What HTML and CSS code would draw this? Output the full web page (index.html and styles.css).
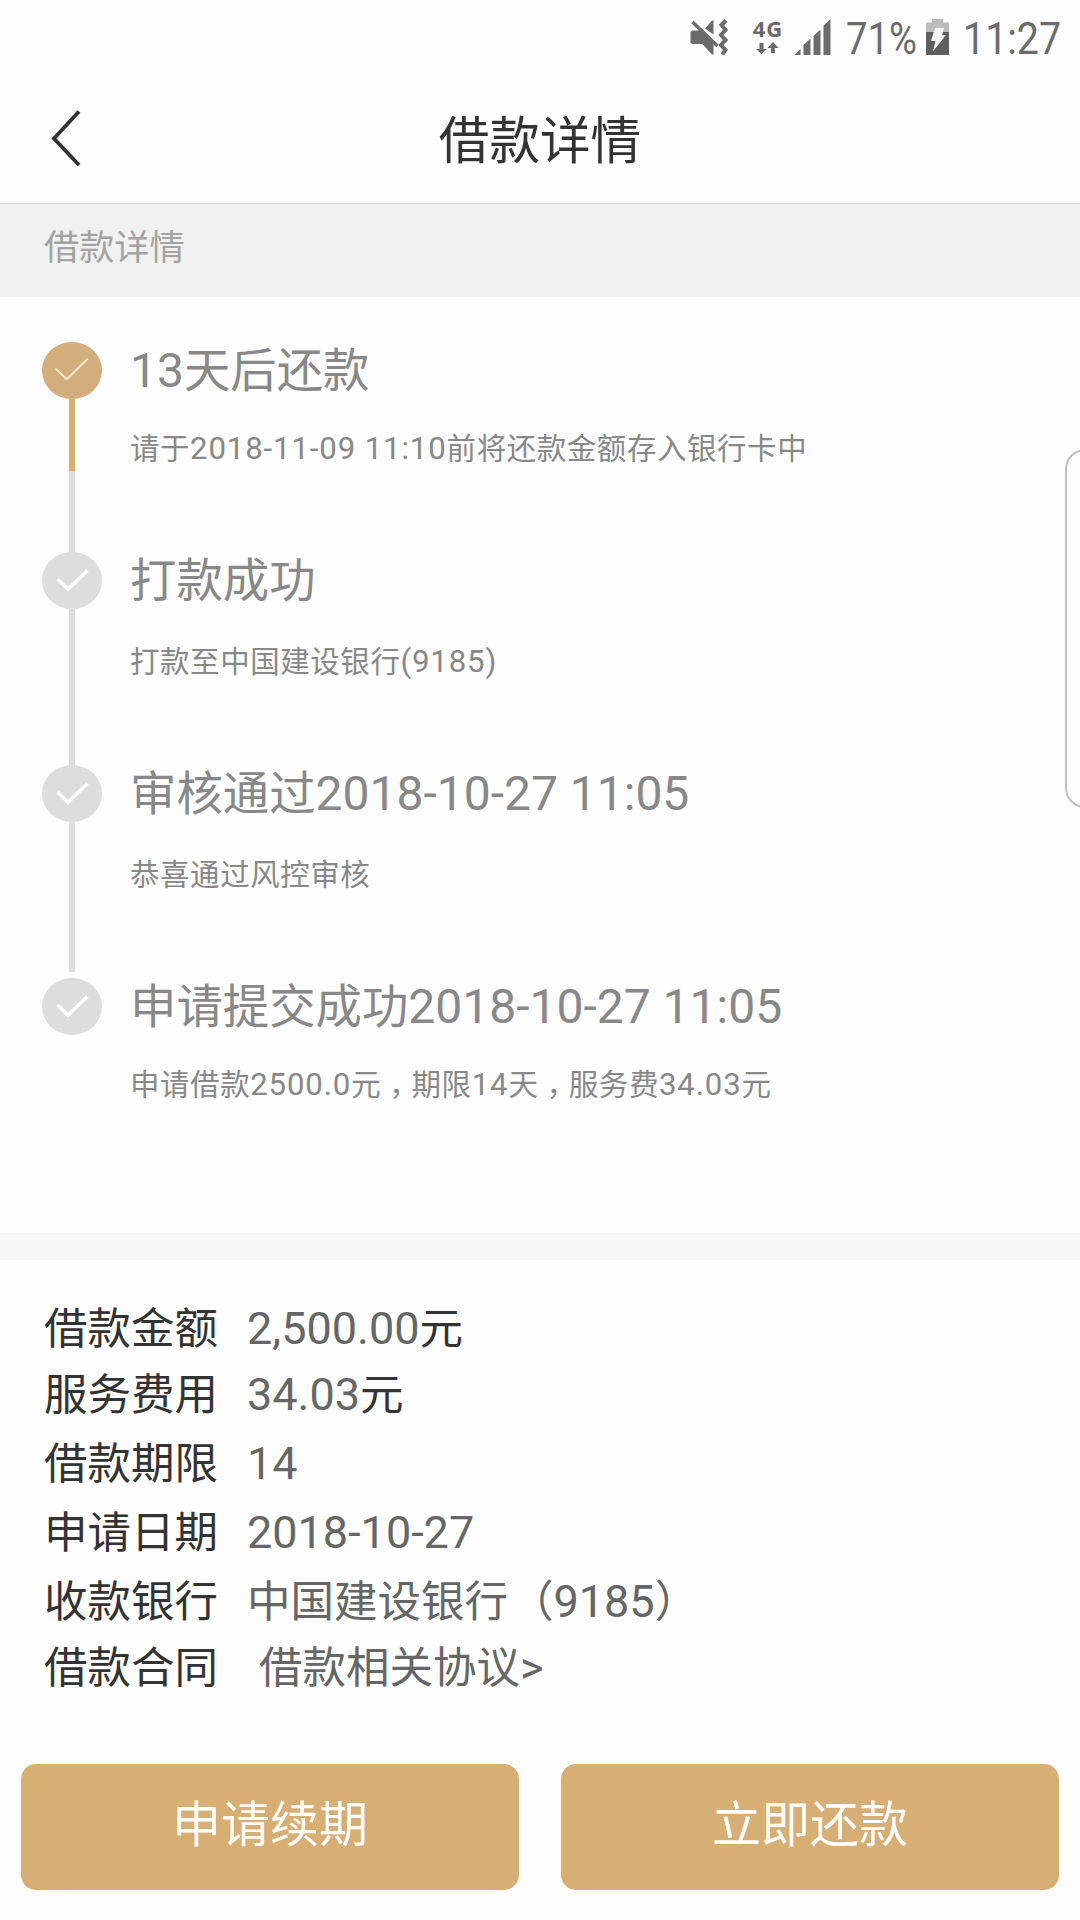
FILE: index.html
```html
<!DOCTYPE html>
<html lang="zh-CN">
<head>
<meta charset="utf-8">
<title>借款详情</title>
<link rel="stylesheet" href="styles.css">
</head>
<body>
<div class="screen">
  <div class="status">
    <svg class="ic-mute" width="40" height="40" viewBox="0 0 40 40"><path d="M2 12.500h9l12.500 12v12h-1.500L12.500 26H2l-1.500-1.500v-10.500z" fill="#6b6b6b"/><path d="M15 10.500 22 2.500h1.500V16.500z" fill="#6b6b6b"/><path d="M2.500 4 27.500 28" stroke="#6b6b6b" stroke-width="3.400"/><path d="M36 2.500 31.500 7 35.500 12 31 17 35.500 22 31 27 35.500 32 32.500 36.500" fill="none" stroke="#6b6b6b" stroke-width="4"/></svg>
    <div class="net"><span class="net-label">4G</span>
      <svg width="24" height="12" viewBox="0 0 24 12"><path d="M4.500 1h4v6H12l-5.500 5L1 7h3.500zM16 11h4V6h3.500L18 0l-5.500 6H16z" fill="#6b6b6b"/></svg>
    </div>
    <svg class="ic-signal" width="38" height="38" viewBox="0 0 38 38"><path d="M.500 37 6.500 31v6zM9.500 27l7-6.500V37h-7zM19.500 18l7-6.500V37h-7zM29.500 7.500 36.500 1v36h-7z" fill="#6b6b6b"/></svg>
    <span class="pct"><span class="narrow">71%</span></span>
    <svg class="ic-batt" width="23" height="38" viewBox="0 0 23 38"><path d="M0 4.500h6V1h11v3.500h6V15H0z" fill="#bcbcbc"/><path d="M0 14h23v23H0z" fill="#5f5f5f"/><path d="M9 10h9l-2 7h4L7 33.500 9.500 23H5z" fill="#f5f5f5"/></svg>
    <span class="time"><span class="narrow narrow-time">11:27</span></span>
  </div>

  <header class="header">
    <svg class="back" width="34" height="60" viewBox="0 0 34 60"><path d="M30 3.500 5 30.500 30 57" fill="none" stroke="#333" stroke-width="3.800"/></svg>
    <h1 class="title">借款详情</h1>
  </header>

  <div class="section-label">借款详情</div>

  <ol class="timeline">
    <li class="step step-now">
      <div class="rail"><svg width="60" height="57" viewBox="0 0 60 57"><ellipse cx="30" cy="28.500" rx="30" ry="28.500" fill="#d1ae7b"/><path d="M13.500 26.500 24.700 37.300 46 16.500" fill="none" stroke="#f6e6cb" stroke-width="2"/></svg><i class="bar bar-gold"></i><i class="bar"></i></div>
      <div class="body"><h2 class="name"><span class="n">13</span>天后还款</h2><p class="desc">请于<span class="n">2018-11-09 11:10</span>前将还款金额存入银行卡中</p></div>
    </li>
    <li class="step step-mid">
      <div class="rail"><svg width="60" height="57" viewBox="0 0 60 57"><ellipse cx="30" cy="28.500" rx="30" ry="28.500" fill="#ddd"/><path d="M15.500 27 26 37.300 45.500 18.500" fill="none" stroke="#fff" stroke-width="3.600"/></svg><i class="bar"></i></div>
      <div class="body"><h2 class="name">打款成功</h2><p class="desc">打款至中国建设银行<span class="n">(9185)</span></p></div>
    </li>
    <li class="step step-mid">
      <div class="rail"><svg width="60" height="57" viewBox="0 0 60 57"><ellipse cx="30" cy="28.500" rx="30" ry="28.500" fill="#ddd"/><path d="M15.500 27 26 37.300 45.500 18.500" fill="none" stroke="#fff" stroke-width="3.600"/></svg><i class="bar bar-short"></i></div>
      <div class="body"><h2 class="name">审核通过<span class="n">2018-10-27 11:05</span></h2><p class="desc">恭喜通过风控审核</p></div>
    </li>
    <li class="step step-last">
      <div class="rail"><svg width="60" height="57" viewBox="0 0 60 57"><ellipse cx="30" cy="28.500" rx="30" ry="28.500" fill="#ddd"/><path d="M15.500 27 26 37.300 45.500 18.500" fill="none" stroke="#fff" stroke-width="3.600"/></svg></div>
      <div class="body"><h2 class="name">申请提交成功<span class="n">2018-10-27 11:05</span></h2><p class="desc">申请借款<span class="n">2500.0</span>元<span class="comma">，</span>期限<span class="n">14</span>天<span class="comma">，</span>服务费<span class="n">34.03</span>元</p></div>
    </li>
  </ol>

  <div class="divider"></div>

  <dl class="details">
    <div class="row"><dt>借款金额</dt><dd><span class="n">2,500.00</span><span class="unit">元</span></dd></div>
    <div class="row"><dt>服务费用</dt><dd><span class="n">34.03</span><span class="unit">元</span></dd></div>
    <div class="row spaced"><dt>借款期限</dt><dd><span class="n">14</span></dd></div>
    <div class="row spaced"><dt>申请日期</dt><dd><span class="n">2018-10-27</span></dd></div>
    <div class="row spaced"><dt>收款银行</dt><dd>中国建设银行<span class="account">（<span class="n">9185</span>）</span></dd></div>
    <div class="row"><dt>借款合同</dt><dd class="link">借款相关协议<span class="n">&gt;</span></dd></div>
  </dl>

  <div class="actions">
    <button class="btn">申请续期</button>
    <button class="btn">立即还款</button>
  </div>

  <div class="edge-handle"></div>
</div>
</body>
</html>
```
FILE: styles.css
```css
* { box-sizing: border-box; margin: 0; padding: 0; }
body { background: #fefefe; font-family: "Noto Sans CJK SC", sans-serif; }
svg { display: block; flex: none; }
.screen { position: relative; width: 1080px; height: 1920px; overflow: hidden; display: flex; flex-direction: column; background: #fefefe; }
.n { font-family: Roboto, "Noto Sans CJK SC", sans-serif; line-height: 0; }

.status { height: 72px; display: flex; align-items: flex-start; padding: 18px 0 0 690px; color: #6b6b6b; font-family: Roboto, sans-serif; }
.net { width: 30px; margin-left: 22px; display: flex; flex-direction: column; align-items: center; }
.net-label { margin-left: 2px; font: 700 22px/21px "Noto Sans", sans-serif; letter-spacing: 1px; white-space: nowrap; }
.net svg { margin-top: 3px; }
.ic-signal { margin-left: 12px; }
.pct, .time { font-size: 45px; line-height: 42px; white-space: nowrap; }
.pct { width: 73px; margin-left: 14px; }
.time { width: 98px; margin-left: 14px; }
.narrow { display: inline-block; width: 0; transform: scaleX(.85); transform-origin: 0 50%; }
.narrow-time { transform: scaleX(.875); }
.ic-batt { margin-left: 7px; }

.header { height: 132px; display: grid; grid-template-columns: 130px 1fr 130px; align-items: center; border-bottom: 1px solid #d8d8d8; }
.back { margin-left: 49px; }
.title { text-align: center; font-size: 50.600px; font-weight: 400; line-height: 131px; color: #333; }

.section-label { height: 93px; padding-left: 44px; background: #f1f1f1; color: #a3a3a3; font-size: 35.200px; line-height: 82px; }

.timeline { list-style: none; height: 936px; padding: 45px 0 0 42px; color: #888; }
.step { display: flex; }
.step-now { height: 210px; }
.step-mid { height: 213px; }
.rail { width: 60px; display: flex; flex-direction: column; align-items: center; }
.bar { width: 6px; flex: 1; background: #ddd; }
.bar-gold { flex: 0 0 72px; background: #d8ae73; }
.bar-short { margin-bottom: 6px; }
.body { margin-left: 28px; white-space: nowrap; }
.name { font-size: 46.400px; font-weight: 400; line-height: 50px; }
.name .n { font-size: 48px; }
.desc { margin-top: 34px; font-size: 29.500px; line-height: 40px; letter-spacing: .550px; }
.step-mid .desc { margin-top: 37px; }
.desc .n { font-size: 31.200px; letter-spacing: .850px; }
.comma { padding-left: 8px; letter-spacing: -7.200px; }

.divider { height: 27px; background: #f7f7f7; }

.details { height: 504px; padding: 33px 0 0 44px; font-size: 43.500px; color: #666; }
.row { display: flex; height: 66px; line-height: 66px; white-space: nowrap; }
.spaced { margin-top: 3px; }
.row dt { width: 203px; color: #333; }
.row .n { font-size: 45px; }
.unit { color: #333; }
.account { padding-left: 2px; }
.link { padding-left: 12px; }

.actions { display: grid; grid-template-columns: 1fr 1fr; gap: 42px; padding: 0 21px; }
.btn { height: 126px; padding: 0 0 12px; border: 0; border-radius: 15px; background: #d7ae74; color: #fff; font: 400 49px/114px "Noto Sans CJK SC", sans-serif; }

.edge-handle { position: absolute; left: 1065px; top: 449px; width: 40px; height: 359px; border: 2px solid #c0c0c0; border-radius: 20px; background: #fcfcfc; }
```
